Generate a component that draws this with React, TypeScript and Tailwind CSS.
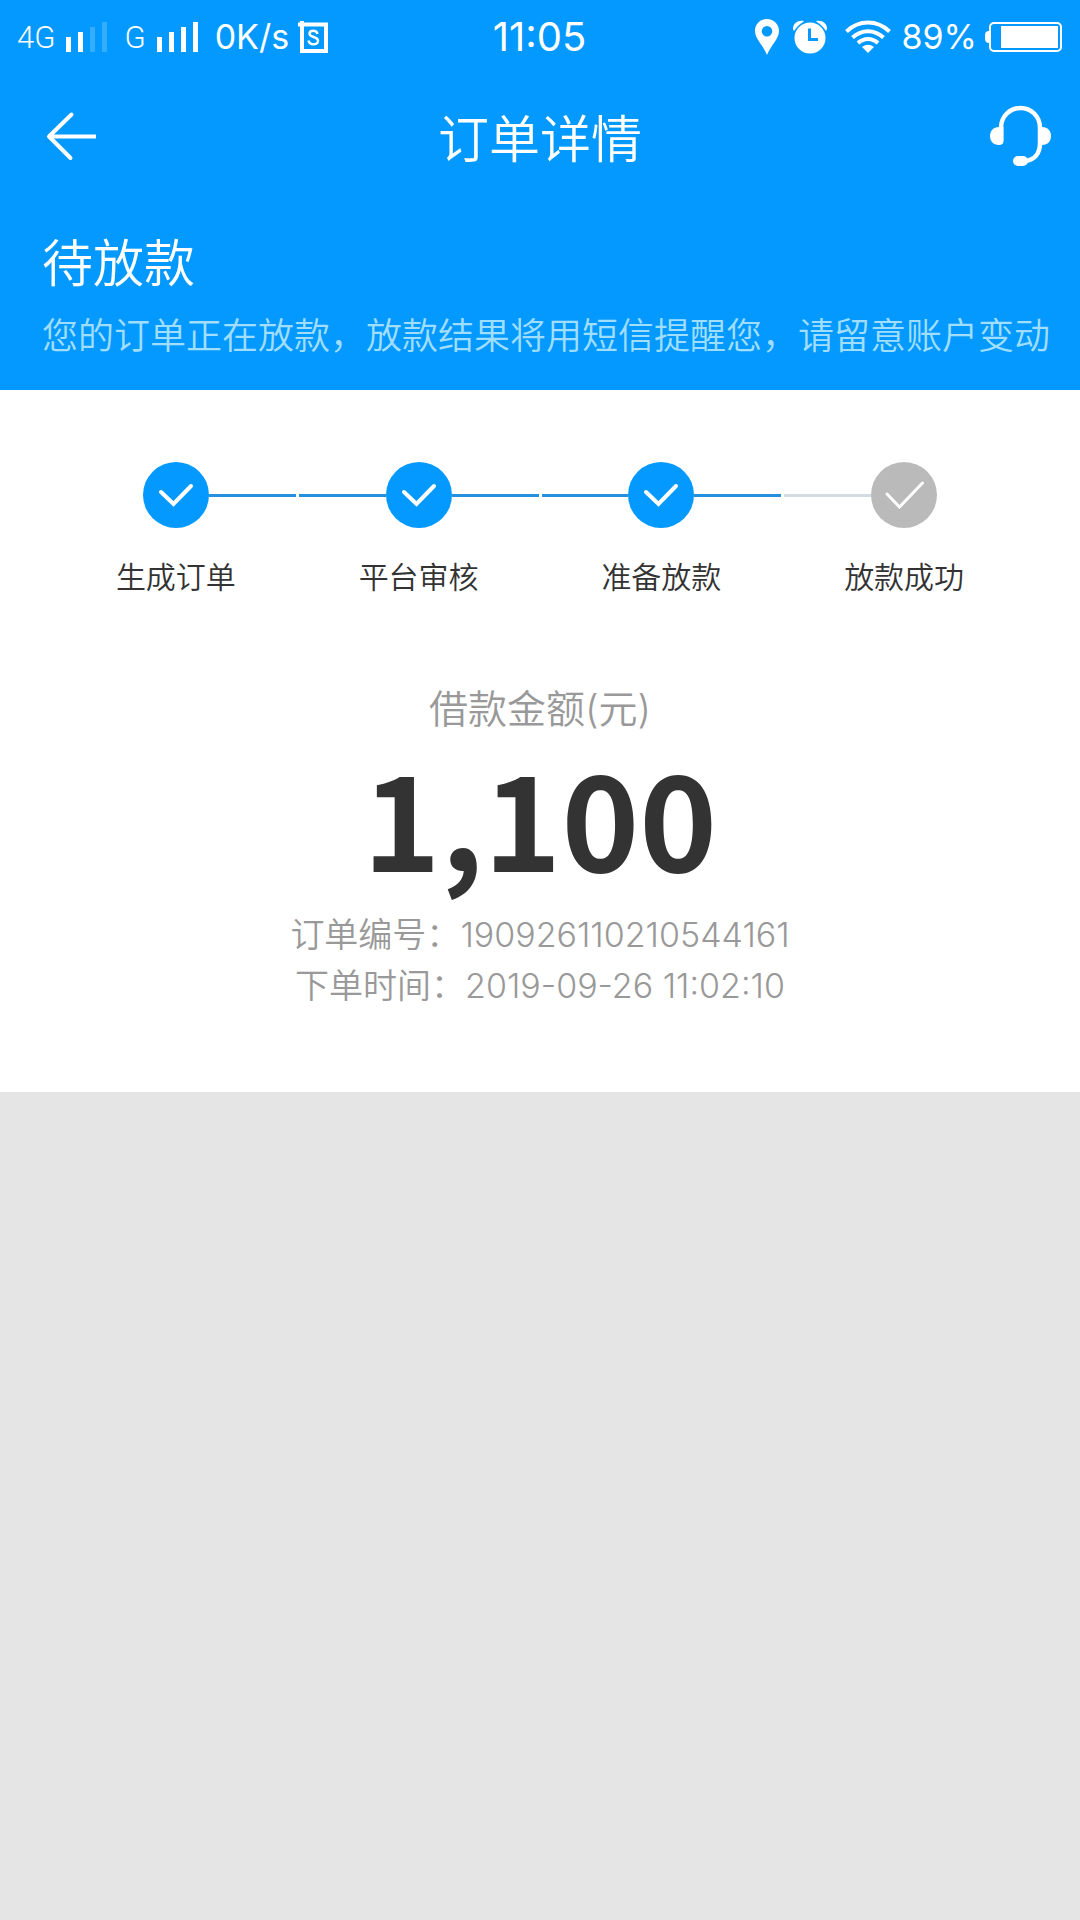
import React from 'react';
import clsx from 'clsx';

interface Step {
    label: string;
    done: boolean;
}

const steps: Step[] = [
    { label: '生成订单', done: true },
    { label: '平台审核', done: true },
    { label: '准备放款', done: true },
    { label: '放款成功', done: false },
];

const order = {
    amount: 1100,
    number: '190926110210544161',
    createdAt: '2019-09-26 11:02:10',
};

// Barres de réseau : level = nombre de barres pleines
const Signal: React.FC<{ level: number }> = ({ level }) => (
    <svg width="42" height="30" viewBox="0 0 42 30" fill="currentColor" aria-hidden="true">
        {[15, 20, 25, 30].map((h, i) => (
            <rect key={h} x={i * 12} y={30 - h} width="5" height={h} opacity={i < level ? 1 : 0.2} />
        ))}
    </svg>
);

const StatusBar: React.FC = () => (
    <div className="flex h-[74px] items-center text-[34px] leading-none">
        <div className="flex flex-1 items-center pl-[17px]">
            <span className="font-['Roboto',sans-serif] text-[31px] font-light">4G</span>
            <span className="ml-[11px]"><Signal level={2} /></span>
            <span className="ml-[16px] font-['Roboto',sans-serif] text-[31px] font-light">G</span>
            <span className="ml-[11px]"><Signal level={4} /></span>
            <span className="ml-[16px]">0K/s</span>
            <svg className="ml-[9px]" width="30" height="32" viewBox="0 0 30 32" fill="none" stroke="currentColor" aria-hidden="true">
                <path d="M0 3.5H28V30H4V0" strokeWidth="4" />
                <path d="M19.5 13C18.5 8.5 11.500 9 11.500 12.800C11.500 17 20 15 20 19.800C20 24.500 11.500 24.500 10.500 19.500" strokeWidth="2.400" />
            </svg>
        </div>
        <span className="text-[40px]">11:05</span>
        <div className="flex flex-1 items-center justify-end pr-[18px]">
            <svg width="24" height="36" viewBox="0 0 24 36" fill="currentColor" aria-hidden="true">
                <path fillRule="evenodd" d="M12 0C5.300 0 0 5.300 0 12C0 20 8 26 12 36C16 26 24 20 24 12C24 5.300 18.700 0 12 0ZM12 7A5.300 5.300 0 1 1 12 17.600A5.300 5.300 0 1 1 12 7Z" />
            </svg>
            <svg className="ml-[14px]" width="34" height="34" viewBox="0 0 34 34" fill="currentColor" aria-hidden="true">
                <path d="M0 9C0 3 5 0 11 1L1 11Z" />
                <path d="M34 9C34 3 29 0 23 1L33 11Z" />
                <circle cx="17" cy="18" r="17" fill="#0399ff" />
                <circle cx="17" cy="18" r="15.500" />
                <path d="M16.500 8.500V19.500H25" fill="none" stroke="#0399ff" strokeWidth="3" />
            </svg>
            <svg className="ml-[18px]" width="46" height="34" viewBox="0 0 46 34" fill="none" stroke="currentColor" strokeWidth="4" aria-hidden="true">
                <path d="M1.500 11.500C14 -0.500 32 -0.500 44.500 11.500" />
                <path d="M7.500 17.500C17 9 29 9 38.500 17.500" />
                <path d="M13 23C19 17.500 27 17.500 33 23" />
                <path d="M17 27C21 24 25 24 29 27L23 33Z" fill="currentColor" stroke="none" />
            </svg>
            <span className="ml-[10px]">89%</span>
            <svg className="ml-[7px]" width="78" height="30" viewBox="0 0 78 30" aria-hidden="true">
                <path d="M5 9C2 9 1 11 1 13V17C1 19 2 21 5 21Z" fill="white" />
                <rect x="6" y="1" width="71" height="28" rx="4" fill="none" stroke="white" strokeWidth="2" />
                <rect x="17" y="4" width="57" height="22" fill="white" stroke="none" />
            </svg>
        </div>
    </div>
);

const NavBar: React.FC = () => (
    <div className="flex h-[124px] items-center justify-between pr-[28px] pl-[46px]">
        <button type="button" aria-label="返回" className="flex">
            <svg width="52" height="50" viewBox="0 0 52 50" fill="none" stroke="currentColor" strokeWidth="4" strokeLinecap="round" aria-hidden="true">
                <path d="M25.500 3.500L3 25.500L24.500 47" strokeLinejoin="round" />
                <path d="M4 25.500H50" strokeLinecap="butt" />
            </svg>
        </button>
        <h1 className="pt-[6px] text-[51px] leading-none font-[350]">订单详情</h1>
        <button type="button" aria-label="客服" className="flex w-[70px] justify-end">
            <svg width="63" height="62" viewBox="0 0 63 62" fill="currentColor" aria-hidden="true">
                <path d="M12 36V23C12 11 21 3 31.500 3C42 3 51 11 51 23V38C51 48 46 55 36 56" fill="none" stroke="currentColor" strokeWidth="4.500" />
                <path d="M14.500 22H10C4 22 1 26 1 31C1 36 4 40 10 40C13 40 14.500 38.500 14.500 36Z" />
                <path d="M49 22H53C59 22 62 26 62 31C62 36 59 40 53 40H49Z" />
                <rect x="24" y="51" width="15" height="10" rx="5" />
            </svg>
        </button>
    </div>
);

const StepItem: React.FC<{ step: Step; first: boolean; last: boolean }> = ({ step, first, last }) => (
    <li className="flex flex-col items-center">
        <div className="flex w-full items-center">
            <span className={clsx('h-[3px] flex-1', !first && (step.done ? 'bg-[#2590dd]' : 'bg-[#d3dce3]'))} />
            <span className={clsx('flex size-[66px] items-center justify-center rounded-full text-white', step.done ? 'bg-[#0399ff]' : 'bg-[#bababa]')}>
                {step.done ? (
                    <svg width="36" height="24" viewBox="0 0 36 24" fill="none" stroke="currentColor" strokeWidth="4" strokeLinecap="round" aria-hidden="true">
                        <path d="M3 9L15.500 21L33 3" />
                    </svg>
                ) : (
                    <svg width="40" height="28" viewBox="0 0 40 28" fill="none" stroke="currentColor" strokeWidth="3" strokeLinecap="round" aria-hidden="true">
                        <path d="M3 13L15.500 26L38.500 2" />
                    </svg>
                )}
            </span>
            <span className={clsx('h-[3px] flex-1', !last && 'bg-[#2590dd]')} />
        </div>
        <span className="mt-[27px] text-[30px] leading-[44px] font-[350] text-[#333]">{step.label}</span>
    </li>
);

const App: React.FC = () => {
    return (
        <div className="min-h-screen bg-[#e5e5e5] font-[Inter,'Noto_Sans_CJK_SC',sans-serif]">
            <header className="bg-[#0399ff] pb-[26px] text-white">
                <StatusBar />
                <NavBar />
                <div className="px-[42px] pt-[34px]">
                    <h2 className="text-[51px] leading-[64px] font-[350]">待放款</h2>
                    <p className="mt-[12px] text-[36px] leading-[56px] font-[350] whitespace-nowrap text-[#a0deff]">
                        您的订单正在放款，放款结果将用短信提醒您，请留意账户变动
                    </p>
                </div>
            </header>

            <main className="bg-white pt-[72px] pb-[81px]">
                <ol className="grid grid-cols-4 gap-[3px] px-[56px]">
                    {steps.map((step, i) => (
                        <StepItem key={step.label} step={step} first={i === 0} last={i === steps.length - 1} />
                    ))}
                </ol>

                <section className="mt-[80px] flex flex-col items-center text-[#999]">
                    <h3 className="text-[39px] leading-[60px] font-[350]">借款金额(元)</h3>
                    <p className="font-['Noto_Sans_CJK_SC',sans-serif] text-[132px] leading-[152px] font-bold text-[#333]">
                        {order.amount.toLocaleString('en-US')}
                    </p>
                    <dl className="mt-[18px] flex flex-col items-center text-[34px] leading-[51px] font-[350]">
                        <div className="flex">
                            <dt>订单编号：</dt>
                            <dd>{order.number}</dd>
                        </div>
                        <div className="flex">
                            <dt>下单时间：</dt>
                            <dd>{order.createdAt}</dd>
                        </div>
                    </dl>
                </section>
            </main>
        </div>
    );
};

export default App;
